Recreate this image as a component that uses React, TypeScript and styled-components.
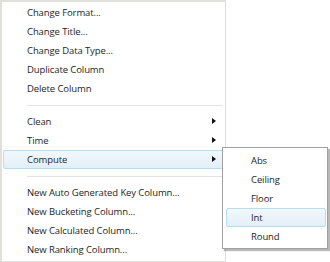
import React from "react";
import styled, { createGlobalStyle } from "styled-components";

const GlobalStyle = createGlobalStyle`
  html, body {
    margin: 0;
    padding: 0;
    background: #ffffff;
  }
  body {
    font-family: "Open Sans", "Noto Sans", sans-serif;
    font-size: 9.5px;
    letter-spacing: -0.1px;
    color: #1e1e1e;
  }
`;

const Page = styled.div`
  position: relative;
  width: 330px;
  height: 262px;
  overflow: hidden;
  background: #ffffff;
`;

const MainMenu = styled.ul`
  box-sizing: border-box;
  width: 226px;
  margin: 0;
  padding: 1px 1px 2px 1px;
  list-style: none;
  background: #ffffff;
  border-top: 2px solid #e1e1dc;
  border-left: 2px solid #e1e1dc;
  border-right: 1px solid #d5dde0;
  border-bottom: 2px solid #e4e4e0;
`;

const SubMenu = styled.ul`
  position: absolute;
  left: 222px;
  top: 147px;
  box-sizing: border-box;
  width: 106px;
  margin: 0;
  padding: 3px 1px 2px 3px;
  list-style: none;
  background: #ffffff;
  border: 1px solid #a0a0a0;
  box-shadow: 2px 2px 1px rgba(0, 0, 0, 0.28);
`;

const Item = styled.li<{ $active?: boolean; $indent?: number }>`
  box-sizing: border-box;
  position: relative;
  height: 19px;
  line-height: 18px;
  padding-left: ${(p) => p.$indent ?? 23}px;
  white-space: nowrap;
  border: 1px solid ${(p) => (p.$active ? "#b4def1" : "transparent")};
  border-radius: 2px;
  background: ${(p) =>
    p.$active ? "linear-gradient(#f2f8fc, #e2eff8)" : "transparent"};
`;

const Separator = styled.li`
  height: 1px;
  margin: 7px 1px 6px 24px;
  background: #e2e3e3;
`;

const Arrow = styled.span`
  position: absolute;
  right: 7px;
  top: 5px;
  width: 0;
  height: 0;
  border-top: 3.5px solid transparent;
  border-bottom: 3.5px solid transparent;
  border-left: 4px solid #111111;
`;

const firstGroup = [
  "Change Format...",
  "Change Title...",
  "Change Data Type...",
  "Duplicate Column",
  "Delete Column",
];

const secondGroup = ["Clean", "Time", "Compute"];

const thirdGroup = [
  "New Auto Generated Key Column...",
  "New Bucketing Column...",
  "New Calculated Column...",
  "New Ranking Column...",
];

const computeItems = ["Abs", "Ceiling", "Floor", "Int", "Round"];

export default function App() {
  return (
    <>
      <GlobalStyle />
      <Page>
        <MainMenu>
          {firstGroup.map((label) => (
            <Item key={label}>{label}</Item>
          ))}
          <Separator />
          {secondGroup.map((label) => (
            <Item key={label} $active={label === "Compute"}>
              {label}
              <Arrow />
            </Item>
          ))}
          <Separator />
          {thirdGroup.map((label) => (
            <Item key={label}>{label}</Item>
          ))}
        </MainMenu>
        <SubMenu>
          {computeItems.map((label) => (
            <Item key={label} $indent={24} $active={label === "Int"}>
              {label}
            </Item>
          ))}
        </SubMenu>
      </Page>
    </>
  );
}
